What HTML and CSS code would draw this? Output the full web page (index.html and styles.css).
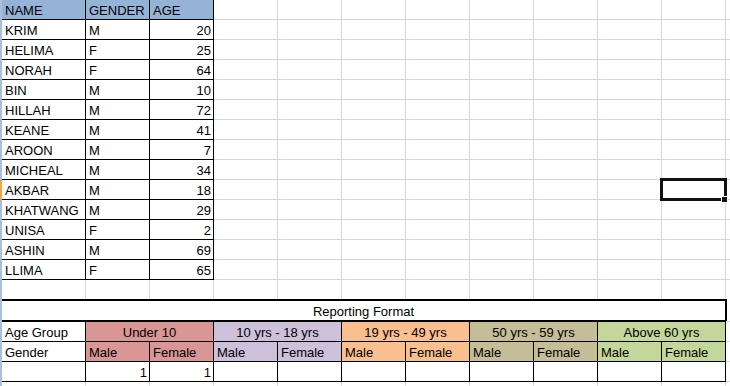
FILE: index.html
```html
<!DOCTYPE html>
<html>
<head>
<meta charset="utf-8">
<link rel="stylesheet" href="styles.css">
</head>
<body>
<div class="sheet">
  <div class="row">
    <div class="rh"></div>
    <div class="c b hd">NAME</div><div class="c b hd">GENDER</div><div class="c b hd">AGE</div>
    <div class="c"></div><div class="c"></div><div class="c"></div><div class="c"></div><div class="c"></div><div class="c"></div><div class="c"></div><div class="c"></div><div class="c"></div>
  </div>
  <div class="row">
    <div class="rh"></div>
    <div class="c b">KRIM</div><div class="c b">M</div><div class="c b n">20</div>
    <div class="c"></div><div class="c"></div><div class="c"></div><div class="c"></div><div class="c"></div><div class="c"></div><div class="c"></div><div class="c"></div><div class="c"></div>
  </div>
  <div class="row">
    <div class="rh"></div>
    <div class="c b">HELIMA</div><div class="c b">F</div><div class="c b n">25</div>
    <div class="c"></div><div class="c"></div><div class="c"></div><div class="c"></div><div class="c"></div><div class="c"></div><div class="c"></div><div class="c"></div><div class="c"></div>
  </div>
  <div class="row">
    <div class="rh"></div>
    <div class="c b">NORAH</div><div class="c b">F</div><div class="c b n">64</div>
    <div class="c"></div><div class="c"></div><div class="c"></div><div class="c"></div><div class="c"></div><div class="c"></div><div class="c"></div><div class="c"></div><div class="c"></div>
  </div>
  <div class="row">
    <div class="rh"></div>
    <div class="c b">BIN</div><div class="c b">M</div><div class="c b n">10</div>
    <div class="c"></div><div class="c"></div><div class="c"></div><div class="c"></div><div class="c"></div><div class="c"></div><div class="c"></div><div class="c"></div><div class="c"></div>
  </div>
  <div class="row">
    <div class="rh"></div>
    <div class="c b">HILLAH</div><div class="c b">M</div><div class="c b n">72</div>
    <div class="c"></div><div class="c"></div><div class="c"></div><div class="c"></div><div class="c"></div><div class="c"></div><div class="c"></div><div class="c"></div><div class="c"></div>
  </div>
  <div class="row">
    <div class="rh"></div>
    <div class="c b">KEANE</div><div class="c b">M</div><div class="c b n">41</div>
    <div class="c"></div><div class="c"></div><div class="c"></div><div class="c"></div><div class="c"></div><div class="c"></div><div class="c"></div><div class="c"></div><div class="c"></div>
  </div>
  <div class="row">
    <div class="rh"></div>
    <div class="c b">AROON</div><div class="c b">M</div><div class="c b n">7</div>
    <div class="c"></div><div class="c"></div><div class="c"></div><div class="c"></div><div class="c"></div><div class="c"></div><div class="c"></div><div class="c"></div><div class="c"></div>
  </div>
  <div class="row">
    <div class="rh"></div>
    <div class="c b">MICHEAL</div><div class="c b">M</div><div class="c b n">34</div>
    <div class="c"></div><div class="c"></div><div class="c"></div><div class="c"></div><div class="c"></div><div class="c"></div><div class="c"></div><div class="c"></div><div class="c"></div>
  </div>
  <div class="row">
    <div class="rh on"></div>
    <div class="c b">AKBAR</div><div class="c b">M</div><div class="c b n">18</div>
    <div class="c"></div><div class="c"></div><div class="c"></div><div class="c"></div><div class="c"></div><div class="c"></div><div class="c"></div><div class="c sel"><span class="sel-box"></span><span class="sel-handle"></span></div><div class="c"></div>
  </div>
  <div class="row">
    <div class="rh"></div>
    <div class="c b">KHATWANG</div><div class="c b">M</div><div class="c b n">29</div>
    <div class="c"></div><div class="c"></div><div class="c"></div><div class="c"></div><div class="c"></div><div class="c"></div><div class="c"></div><div class="c"></div><div class="c"></div>
  </div>
  <div class="row">
    <div class="rh"></div>
    <div class="c b">UNISA</div><div class="c b">F</div><div class="c b n">2</div>
    <div class="c"></div><div class="c"></div><div class="c"></div><div class="c"></div><div class="c"></div><div class="c"></div><div class="c"></div><div class="c"></div><div class="c"></div>
  </div>
  <div class="row">
    <div class="rh"></div>
    <div class="c b">ASHIN</div><div class="c b">M</div><div class="c b n">69</div>
    <div class="c"></div><div class="c"></div><div class="c"></div><div class="c"></div><div class="c"></div><div class="c"></div><div class="c"></div><div class="c"></div><div class="c"></div>
  </div>
  <div class="row">
    <div class="rh"></div>
    <div class="c b">LLIMA</div><div class="c b">F</div><div class="c b n">65</div>
    <div class="c"></div><div class="c"></div><div class="c"></div><div class="c"></div><div class="c"></div><div class="c"></div><div class="c"></div><div class="c"></div><div class="c"></div>
  </div>
  <div class="row gap">
    <div class="rh"></div>
    <div class="c"></div><div class="c"></div><div class="c"></div>
    <div class="c"></div><div class="c"></div><div class="c"></div><div class="c"></div><div class="c"></div><div class="c"></div><div class="c"></div><div class="c"></div><div class="c"></div>
  </div>
  <div class="row rep">
    <div class="rh"></div>
    <div class="c merge">Reporting Format</div>
    <div class="c"></div>
  </div>
  <div class="row">
    <div class="rh"></div>
    <div class="c b">Age Group</div>
    <div class="c b ctr span2 f-red">Under 10</div>
    <div class="c b ctr span2 f-purple">10 yrs - 18 yrs</div>
    <div class="c b ctr span2 f-orange">19 yrs - 49 yrs</div>
    <div class="c b ctr span2 f-tan">50 yrs - 59 yrs</div>
    <div class="c b ctr span2 f-green">Above 60 yrs</div>
    <div class="c"></div>
  </div>
  <div class="row">
    <div class="rh"></div>
    <div class="c b">Gender</div>
    <div class="c b f-red">Male</div><div class="c b f-red">Female</div>
    <div class="c b f-purple">Male</div><div class="c b f-purple">Female</div>
    <div class="c b f-orange">Male</div><div class="c b f-orange">Female</div>
    <div class="c b f-tan">Male</div><div class="c b f-tan">Female</div>
    <div class="c b f-green">Male</div><div class="c b f-green">Female</div>
    <div class="c"></div>
  </div>
  <div class="row">
    <div class="rh"></div>
    <div class="c b"></div>
    <div class="c b n">1</div><div class="c b n">1</div>
    <div class="c b"></div><div class="c b"></div>
    <div class="c b"></div><div class="c b"></div>
    <div class="c b"></div><div class="c b"></div>
    <div class="c b"></div><div class="c b"></div>
    <div class="c"></div>
  </div>
  <div class="row">
    <div class="rh"></div>
    <div class="c"></div><div class="c"></div><div class="c"></div>
    <div class="c"></div><div class="c"></div><div class="c"></div><div class="c"></div><div class="c"></div><div class="c"></div><div class="c"></div><div class="c"></div><div class="c"></div>
  </div>
</div>
</body>
</html>
```

FILE: styles.css
```css
html, body {
  margin: 0;
  padding: 0;
  background: #ffffff;
  overflow: hidden;
}

.sheet {
  font-family: "Liberation Sans", Arial, sans-serif;
  font-size: 13px;
  color: #000000;
  width: 730px;
}

.row {
  display: grid;
  grid-template-columns: 2px 84px repeat(10, 64px) 1fr;
  height: 20px;
}

.row.gap {
  height: 19px;
}

.row.gap .c {
  border-bottom: 0;
}

.row.rep {
  height: 23px;
}

.rh {
  background: #a9bfdb;
}

.rh.on {
  background: #f2a54c;
}

.c {
  box-sizing: border-box;
  border-right: 1px solid #d0d7e5;
  border-bottom: 1px solid #d0d7e5;
  line-height: 21px;
  padding: 0 3px;
  white-space: nowrap;
  overflow: hidden;
}

.c.b {
  border-color: #000000;
}

.c.n {
  text-align: right;
  padding-right: 2px;
}

.c.ctr {
  text-align: center;
}

.span2 {
  grid-column: span 2;
}

.hd {
  background: #95b3d7;
}

.merge {
  grid-column: 2 / 13;
  margin-right: -1px;
  border: 2px solid #000000;
  border-left: 0;
  text-align: center;
}

.f-red { background: #da9694; }
.f-purple { background: #ccc0da; }
.f-orange { background: #fabf8f; }
.f-tan { background: #c4bd97; }
.f-green { background: #c4d79b; }

.sel {
  position: relative;
  overflow: visible;
}

.sel-box {
  position: absolute;
  left: -2px;
  top: -2px;
  right: -2px;
  bottom: -2px;
  border: 3px solid #111111;
}

.sel-handle {
  position: absolute;
  right: -3px;
  bottom: -4px;
  width: 5px;
  height: 5px;
  background: #111111;
  border: 1px solid #ffffff;
}
```
